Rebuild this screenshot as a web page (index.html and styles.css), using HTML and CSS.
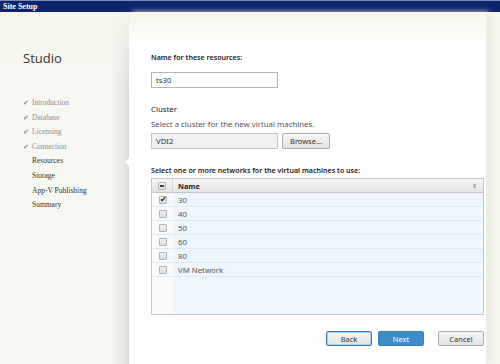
FILE: index.html
```html
<!DOCTYPE html>
<html lang="en">
<head>
  <meta charset="UTF-8" />
  <meta name="viewport" content="width=device-width, initial-scale=1.0"/>
  <title>Site Setup</title>
  <link rel="stylesheet" href="styles.css">
</head>
<body>
  <div class="titlebar">Site Setup</div>

  <div class="wizard">
    <aside class="steps">
      <h1>Studio</h1>
      <ul>
        <li class="done">Introduction</li>
        <li class="done">Database</li>
        <li class="done">Licensing</li>
        <li class="done">Connection</li>
        <li class="current">Resources</li>
        <li>Storage</li>
        <li>App-V Publishing</li>
        <li>Summary</li>
      </ul>
    </aside>

    <main class="page">
      <div class="label strong">Name for these resources:</div>
      <div class="field name-field">ts30</div>

      <div class="label cluster-title">Cluster</div>
      <div class="hint">Select a cluster for the new virtual machines.</div>
      <div class="cluster-row">
        <div class="field readonly">VDI2</div>
        <button class="btn browse">Browse...</button>
      </div>

      <div class="label strong net-title">Select one or more networks for the virtual machines to use:</div>
      <div class="grid">
        <div class="grid-head">
          <div class="cell-check"><span class="box mixed"></span></div>
          <div class="cell-name">Name</div>
          <span class="sort">&#8661;</span>
        </div>
        <div class="row"><div class="cell-check"><span class="box checked"></span></div><div class="cell-name">30</div></div>
        <div class="row"><div class="cell-check"><span class="box"></span></div><div class="cell-name">40</div></div>
        <div class="row"><div class="cell-check"><span class="box"></span></div><div class="cell-name">50</div></div>
        <div class="row"><div class="cell-check"><span class="box"></span></div><div class="cell-name">60</div></div>
        <div class="row"><div class="cell-check"><span class="box"></span></div><div class="cell-name">80</div></div>
        <div class="row"><div class="cell-check"><span class="box"></span></div><div class="cell-name">VM Network</div></div>
      </div>

      <div class="actions">
        <button class="btn back">Back</button>
        <button class="btn next">Next</button>
        <button class="btn cancel">Cancel</button>
      </div>
    </main>
  </div>
</body>
</html>
```

FILE: styles.css
```css
body {
  margin: 0;
  width: 500px;
  height: 364px;
  overflow: hidden;
  background: #f4f6ec;
  font-family: 'Noto Sans', sans-serif;
  font-size: 7.8px;
  color: #222;
}
.titlebar {
  height: 11px;
  line-height: 11px;
  background: #0c246b;
  border-top: 1px solid #7b8bb5;
  color: white;
  font-family: 'Liberation Serif', serif;
  font-weight: bold;
  font-size: 8px;
  padding-left: 3px;
}
.wizard {
  display: flex;
  height: 352px;
}
.steps {
  width: 129px;
  flex: none;
  background:
    linear-gradient(to bottom, #f4f6ec 0, rgba(244,246,236,0) 80px),
    linear-gradient(to right, #f7f8f2 0, #f7f8f2 86%, #e6e6e4 96%, #d8d8d8 100%);
  position: relative;
}
.steps h1 {
  margin: 38px 0 0 23px;
  font-family: 'Open Sans', sans-serif;
  font-weight: normal;
  font-size: 13px;
  line-height: 16px;
  color: #333;
}
.steps ul {
  list-style: none;
  margin: 30px 0 0 0;
  padding: 0 0 0 32px;
  font-family: 'Liberation Serif', serif;
  font-size: 7.5px;
}
.steps li {
  height: 14.6px;
  line-height: 14.6px;
  color: #333;
  position: relative;
}
.steps li.done {
  color: #8e8e8e;
}
.steps li.done::before {
  content: '\2714';
  position: absolute;
  left: -9px;
  font-size: 7px;
  color: #8090a0;
}
.steps li.current::after {
  content: '';
  position: absolute;
  right: 0;
  top: 4px;
  border: 4px solid transparent;
  border-right-color: white;
  border-left: none;
}
.page {
  flex: 1;
  margin-right: 14px;
  padding: 39px 0 0 22px;
  background: linear-gradient(to bottom, #f4f6ec 0, #ffffff 36px);
  box-shadow: 3px 0 6px rgba(230,233,220,0.9);
}
.label {
  line-height: 12px;
  color: #222;
}
.strong {
  font-weight: 600;
  font-size: 7.1px;
}
.field {
  box-sizing: border-box;
  width: 127px;
  height: 16px;
  line-height: 14px;
  border: 1px solid #b5b5b5;
  background: white;
  padding-left: 4px;
  color: #333;
}
.name-field {
  margin-top: 9px;
}
.cluster-title {
  margin-top: 15px;
}
.hint {
  margin-top: 3px;
  line-height: 12px;
  color: #555;
}
.cluster-row {
  display: flex;
  gap: 4px;
  margin-top: 3px;
}
.field.readonly {
  background: #f1f1f1;
  border-color: #c4c4c4;
}
.btn {
  box-sizing: border-box;
  height: 16px;
  padding: 0;
  font-family: 'Noto Sans', sans-serif;
  font-size: 7.5px;
  color: #333;
  border: 1px solid #acacac;
  border-radius: 2px;
  background: linear-gradient(#f7f7f7, #e2e2e2);
}
.browse {
  width: 48px;
}
.net-title {
  margin-top: 15px;
}
.grid {
  box-sizing: border-box;
  margin-top: 2px;
  width: 333px;
  height: 137px;
  border: 1px solid #c9c9c9;
  background: linear-gradient(to right, #fafafa 0, #fafafa 21px, #eef5fd 21px);
}
.grid-head, .row {
  display: flex;
  align-items: center;
}
.grid-head {
  height: 13px;
  background: linear-gradient(#f7f7f7, #e4e4e4);
  border-bottom: 1px solid #c6c6c6;
  font-weight: bold;
  font-size: 7.3px;
  position: relative;
}
.row {
  height: 13px;
  border-bottom: 1px solid #e0eaf5;
  color: #555;
}
.cell-check {
  width: 21px;
  height: 100%;
  display: flex;
  align-items: center;
  justify-content: center;
  flex: none;
}
.grid-head .cell-check {
  border-right: 1px solid #d4d4d4;
  box-sizing: border-box;
}
.row .cell-check {
  background: #fafafa;
}
.cell-name {
  padding-left: 5px;
}
.sort {
  position: absolute;
  right: 6px;
  font-size: 6px;
  color: #999;
}
.box {
  box-sizing: border-box;
  width: 8px;
  height: 8px;
  border: 1px solid #b4b4b4;
  border-radius: 1px;
  background: linear-gradient(#f2f2f2, #dedede);
  position: relative;
}
.box.checked::after {
  content: '\2714';
  position: absolute;
  left: 0;
  top: -4px;
  font-size: 8px;
  font-weight: normal;
  color: #222;
}
.box.mixed::after {
  content: '';
  position: absolute;
  left: 1px;
  top: 2px;
  width: 4px;
  height: 2px;
  background: #444;
}
.actions {
  display: flex;
  justify-content: flex-end;
  width: 333px;
  margin-top: 16px;
}
.actions .btn {
  width: 46px;
  height: 15px;
}
.back {
  border-color: #3d7ab0;
  box-shadow: inset 0 0 0 1px #a9d0ee;
}
.next {
  margin-left: 6px;
  background: #3d8dc8;
  border-color: #3a7fb5;
  color: white;
}
.cancel {
  margin-left: 14px;
  width: 47px;
}
```
